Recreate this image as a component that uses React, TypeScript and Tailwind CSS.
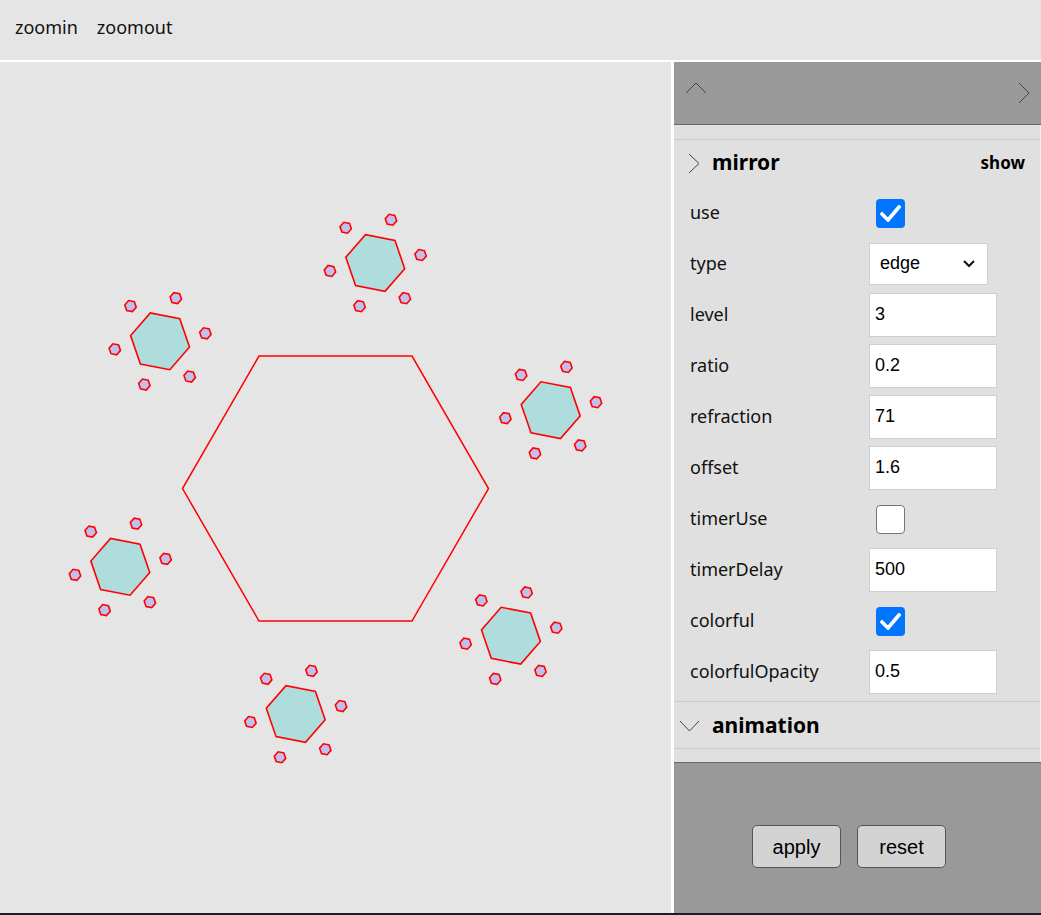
import React from "react"

type Row = { label: string; kind: "check" | "text" | "select"; value?: string; checked?: boolean }

const rows: Row[] = [
  { label: "use", kind: "check", checked: true },
  { label: "type", kind: "select", value: "edge" },
  { label: "level", kind: "text", value: "3" },
  { label: "ratio", kind: "text", value: "0.2" },
  { label: "refraction", kind: "text", value: "71" },
  { label: "offset", kind: "text", value: "1.6" },
  { label: "timerUse", kind: "check", checked: false },
  { label: "timerDelay", kind: "text", value: "500" },
  { label: "colorful", kind: "check", checked: true },
  { label: "colorfulOpacity", kind: "text", value: "0.5" },
]

function hexPoints(cx: number, cy: number, r: number, offsetDeg: number) {
  const pts: string[] = []
  for (let i = 0; i < 6; i++) {
    const a = ((offsetDeg + i * 60) * Math.PI) / 180
    pts.push(`${(cx + r * Math.cos(a)).toFixed(2)},${(cy + r * Math.sin(a)).toFixed(2)}`)
  }
  return pts.join(" ")
}

function Kaleido() {
  // big hexagon centre in canvas coords
  const cx = 335.5
  const cy = 426.5
  const sats = [0, 1, 2, 3, 4, 5].map((k) => {
    const a = ((-80 + k * 60) * Math.PI) / 180
    return { x: cx + 229 * Math.cos(a), y: cy + 229 * Math.sin(a) }
  })
  return (
    <svg width="671" height="851" viewBox="0 0 671 851" className="block">
      <polygon points={hexPoints(cx, cy, 153, 0)} fill="none" stroke="#ff0000" strokeWidth="1.5" />
      {sats.map((s, i) => (
        <g key={i}>
          <polygon points={hexPoints(s.x, s.y, 30, 11)} fill="#afdcdc" stroke="#ff0000" strokeWidth="1.6" />
          {[0, 1, 2, 3, 4, 5].map((j) => {
            const b = ((-70 + j * 60) * Math.PI) / 180
            return (
              <polygon
                key={j}
                points={hexPoints(s.x + 46 * Math.cos(b), s.y + 46 * Math.sin(b), 5.8, 11)}
                fill="#c0c0ee"
                stroke="#ff0000"
                strokeWidth="1.6"
              />
            )
          })}
        </g>
      ))}
    </svg>
  )
}

function CheckBox({ checked }: { checked?: boolean }) {
  if (!checked) {
    return <div className="ml-[7px] mt-[2px] w-[29px] h-[29px] rounded-[4px] bg-white border border-[#767676]" />
  }
  return (
    <div className="ml-[7px] mt-[2px] w-[29px] h-[29px] rounded-[4px] bg-[#0075ff] flex items-center justify-center">
      <svg width="21" height="17" viewBox="0 0 21 17">
        <polyline points="2,9 8,15 19,2" fill="none" stroke="white" strokeWidth="3.6" strokeLinecap="square" />
      </svg>
    </div>
  )
}

function Field({ row }: { row: Row }) {
  if (row.kind === "check") return <CheckBox checked={row.checked} />
  if (row.kind === "select") {
    return (
      <div className="w-[119px] h-[42px] bg-white border border-[#cfcfcf] flex items-center pl-[10px] pr-[11px] font-['Liberation_Sans',Arial,sans-serif] text-[18px] text-black">
        <span>{row.value}</span>
        <svg width="14" height="9" viewBox="0 0 14 9" className="ml-auto">
          <polyline points="2,2 7,7 12,2" fill="none" stroke="#111" strokeWidth="2" />
        </svg>
      </div>
    )
  }
  return (
    <div className="w-[128px] h-[44px] bg-white border border-[#cfcfcf] flex items-center pl-[5px] font-['Liberation_Sans',Arial,sans-serif] text-[18px] text-black">
      {row.value}
    </div>
  )
}

export default function App() {
  return (
    <div className="w-[1041px] h-[915px] bg-white flex flex-col overflow-hidden font-['Noto_Sans',sans-serif] text-[#111]">
      <div className="h-[60px] bg-[#e5e5e5] flex items-center px-[15px] gap-[19px] text-[18px] pb-[6px]">
        <span>zoomin</span>
        <span>zoomout</span>
      </div>
      <div className="mt-[2px] flex h-[851px]">
        <div className="w-[671px] bg-[#e5e5e5]">
          <Kaleido />
        </div>
        <div className="ml-[3px] w-[367px] flex flex-col">
          <div className="h-[63px] bg-[#999999] border-b border-[#666666] flex justify-between px-[11px]">
            <svg width="22" height="12" viewBox="0 0 22 12" className="mt-[20px]">
              <polyline points="1,11 11,1 21,11" fill="none" stroke="#444" strokeWidth="1" />
            </svg>
            <svg width="12" height="22" viewBox="0 0 12 22" className="mt-[20px]">
              <polyline points="1,1 11,11 1,21" fill="none" stroke="#444" strokeWidth="1" />
            </svg>
          </div>
          <div className="bg-[#e0e0e0] border-r border-[#f2f2f2]">
            <div className="h-[14px]" />
            <div className="border-t border-[#cbcbcb] h-[47px] flex items-center">
              <svg width="12" height="21" viewBox="0 0 12 21" className="ml-[14px]">
                <polyline points="1,1 11,10.5 1,20" fill="none" stroke="#444" strokeWidth="1" />
              </svg>
              <span className="ml-[12px] text-[21px] font-bold text-black">mirror</span>
              <span className="ml-auto mr-[15px] text-[17px] font-bold text-black">show</span>
            </div>
            <div className="pt-[1px] pb-[4px]">
              {rows.map((r) => (
                <div key={r.label} className="h-[51px] flex items-center">
                  <div className="w-[195px] pl-[16px] text-[18px] text-[#111]">{r.label}</div>
                  <Field row={r} />
                </div>
              ))}
            </div>
            <div className="border-t border-[#cbcbcb] h-[47px] flex items-center pt-[2px]">
              <svg width="21" height="12" viewBox="0 0 21 12" className="ml-[5px]">
                <polyline points="1,1 10.5,11 20,1" fill="none" stroke="#444" strokeWidth="1" />
              </svg>
              <span className="ml-[12px] text-[21px] font-bold text-black">animation</span>
            </div>
            <div className="border-t border-[#cbcbcb] h-[14px]" />
          </div>
          <div className="flex-1 bg-[#999999] border-t border-[#666666] flex justify-center gap-[16px] pt-[62px] pr-[17px]">
            <button className="w-[89px] h-[43px] rounded-[5px] border border-[#555] bg-[#d3d3d3] font-['Liberation_Sans',Arial,sans-serif] text-[20px] text-black">
              apply
            </button>
            <button className="w-[89px] h-[43px] rounded-[5px] border border-[#555] bg-[#d3d3d3] font-['Liberation_Sans',Arial,sans-serif] text-[20px] text-black">
              reset
            </button>
          </div>
        </div>
      </div>
      <div className="h-[2px] bg-[#1c1a2e]" />
    </div>
  )
}
